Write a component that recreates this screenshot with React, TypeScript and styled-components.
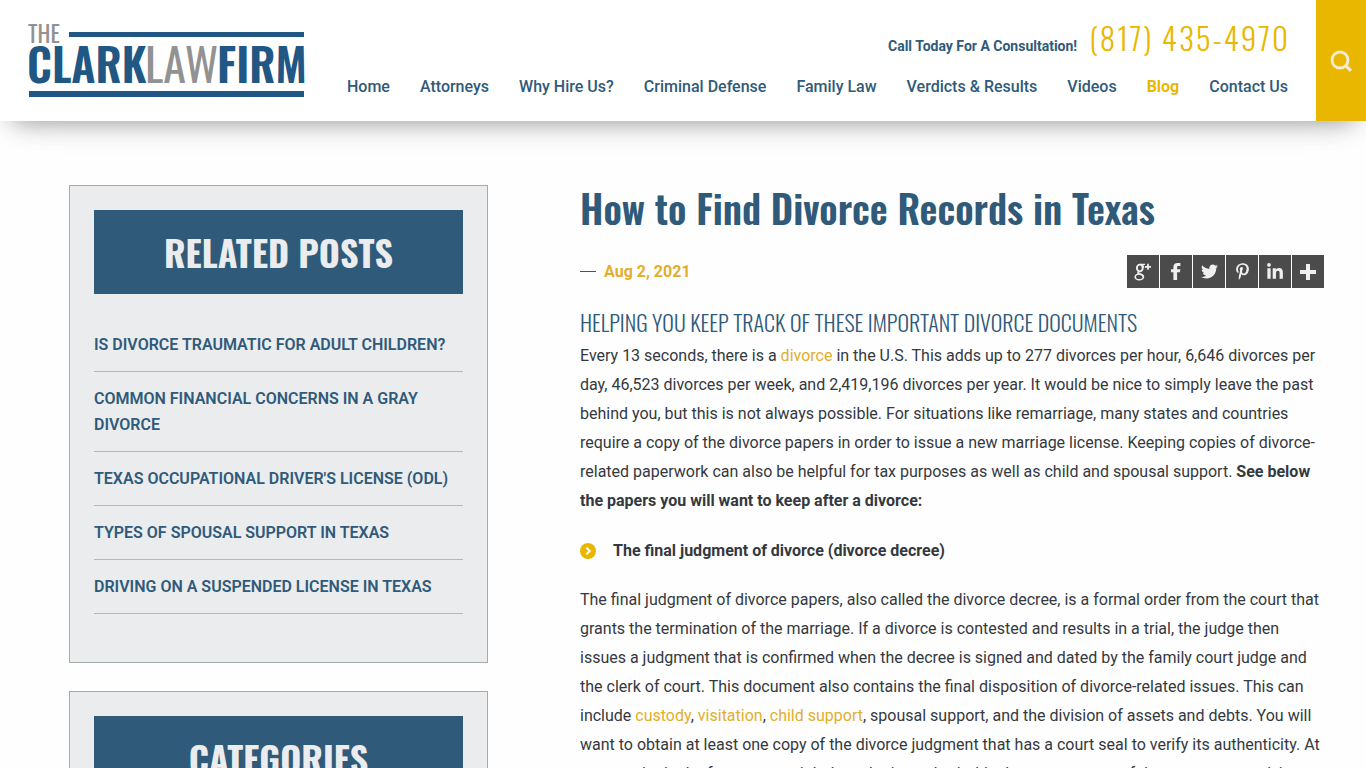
import React from 'react';
import styled, { createGlobalStyle } from 'styled-components';
import { FaFacebookF, FaLinkedinIn, FaPinterestP, FaTwitter } from 'react-icons/fa';

const color = {
  navy: '#305a7a',
  gold: '#eab700',
  link: '#e2ae2c',
  text: '#34393e',
  panel: '#eaecee',
  rule: '#a6acac',
};

const heading = "Oswald, 'Roboto Condensed', sans-serif";

const GlobalStyle = createGlobalStyle`
  *, *::before, *::after { box-sizing: border-box; }
  body {
    margin: 0;
    background: #fefefe;
    color: ${color.text};
    font: 400 16px/29px Roboto, sans-serif;
  }
  h1, h2, h3, p, ul { margin: 0; padding: 0; }
  ul { list-style: none; }
  a { text-decoration: none; }
`;

const Header = styled.header`
  position: relative;
  display: flex;
  min-height: 121px;
  background: #fff;
  box-shadow: 0 12px 24px -12px rgba(0, 0, 0, 0.4), 0 20px 40px -20px rgba(0, 0, 0, 0.08);
`;

const LogoLink = styled.a`
  flex: none;
  padding: 20px 0 0 24px;
`;

const LogoArt = styled.svg`
  display: block;
  overflow: visible;
  font-family: ${heading};
`;

const HeaderBody = styled.div`
  flex: 1;
  display: flex;
  flex-direction: column;
  align-items: flex-end;
  padding: 13px 26px 0 0;
`;

const CallLine = styled.p`
  display: flex;
  align-items: baseline;
  gap: 12px;
  color: ${color.navy};
  font-size: 14px;
  font-weight: 700;
  line-height: 48px;
`;

const Phone = styled.a`
  color: ${color.gold};
  font-family: ${heading};
  font-size: 31px;
  font-weight: 300;
  letter-spacing: 2px;
`;

const NavList = styled.ul`
  display: flex;
  gap: 30px;
  line-height: 24px;
  margin: 5px 2px 0 0;
`;

const NavLink = styled.a<{ $active?: boolean }>`
  color: ${(p) => (p.$active ? color.gold : color.navy)};
  font-weight: ${(p) => (p.$active ? 700 : 500)};
`;

const SearchButton = styled.button`
  width: 50px;
  border: 0;
  padding: 0;
  display: flex;
  align-items: center;
  justify-content: center;
  background: ${color.gold};
  color: #f6ecd0;
`;

const Page = styled.div`
  display: grid;
  grid-template-columns: 419fr 744fr;
  align-items: start;
  column-gap: 92px;
  padding: 64px 42px 0 69px;
`;

const Sidebar = styled.aside`
  display: grid;
  gap: 28px;
`;

const Panel = styled.section`
  padding: 24px;
  background: ${color.panel};
  border: 1px solid ${color.rule};
`;

const PanelTitle = styled.h2`
  padding: 12px;
  background: ${color.navy};
  color: ${color.panel};
  font: 700 36px/60px ${heading};
  text-align: center;
  text-transform: uppercase;
`;

const PostList = styled.ul`
  margin: 24px 0;
`;

const PostItem = styled.li`
  padding: 14px 0 13px;
  border-bottom: 1px solid #b4b9bb;
  line-height: 26px;
`;

const PostLink = styled.a`
  color: ${color.navy};
  font-weight: 600;
  text-transform: uppercase;
`;

const Title = styled.h1`
  color: ${color.navy};
  font: 600 39px/44px ${heading};
`;

const Meta = styled.div`
  display: flex;
  align-items: center;
  justify-content: space-between;
  margin: 26px 0 16px;
`;

const PostDate = styled.time`
  display: flex;
  align-items: center;
  gap: 8px;
  color: ${color.link};
  font-weight: 700;

  &::before {
    content: '';
    width: 16px;
    height: 1px;
    background: ${color.navy};
  }
`;

const ShareList = styled.ul`
  display: flex;
  gap: 1px;
`;

const ShareLink = styled.a`
  display: flex;
  align-items: center;
  justify-content: center;
  width: 32px;
  height: 33px;
  background: #4b4b4b;
  color: #efefef;
`;

const Subtitle = styled.h3`
  color: ${color.navy};
  font: 350 22px/36px ${heading};
  padding-bottom: 1px;
  text-transform: uppercase;
`;

const TextLink = styled.a`
  color: ${color.link};
`;

const PaperItem = styled.li`
  display: flex;
  align-items: center;
  gap: 17px;
  margin: 21px 0 20px;
  font-weight: 700;
`;

const nav = [
  'Home', 'Attorneys', 'Why Hire Us?', 'Criminal Defense', 'Family Law',
  'Verdicts & Results', 'Videos', 'Blog', 'Contact Us',
];

const relatedPosts = [
  'Is Divorce Traumatic for Adult Children?',
  'Common Financial Concerns in a Gray Divorce',
  "Texas Occupational Driver's License (ODL)",
  'Types of Spousal Support in Texas',
  'Driving on a Suspended License in Texas',
];

const categories = ['Criminal Defense', 'Divorce', 'Family Law'];

const PlusIcon = () => (
  <svg width="16" height="16" viewBox="0 0 16 16" aria-hidden="true">
    <path d="M6 0h4v6h6v4h-6v6H6v-6H0V6h6z" fill="currentColor" />
  </svg>
);

const GooglePlusIcon = () => (
  <svg width="18" height="18" viewBox="0 0 18 18" fill="none" stroke="currentColor" aria-hidden="true">
    <ellipse cx="5.8" cy="5" rx="2.9" ry="3.4" strokeWidth="1.9" />
    <path d="M6 1.4h5M8.2 1.8c1 .7 1.4 1.6 1.4 3" strokeWidth="1.4" />
    <path d="M5.2 8.2c-2.4 1.5-1 2.3.6 2.8 2.6.7 3.6 1.4 3.6 2.9" strokeWidth="1.6" />
    <ellipse cx="5.3" cy="13.9" rx="4.1" ry="2.9" strokeWidth="1.6" />
    <path d="M14 .8v6M11 3.8h6" strokeWidth="1.7" />
  </svg>
);

const FacebookIcon = () => (
  <svg width="10" height="17" viewBox="0 0 10 17" fill="currentColor" aria-hidden="true">
    <path d="M2.4 17V9.2H0V6.2h2.4V4.2C2.4 1.4 3.9 0 6.4 0H9.4v3H7.6c-1 0-1.5.4-1.5 1.4v1.8h3.2l-.4 3H6.1V17z" />
  </svg>
);

const shares = [
  { label: 'Google Plus', icon: <GooglePlusIcon /> },
  { label: 'Facebook', icon: <FacebookIcon /> },
  { label: 'Twitter', icon: <FaTwitter size={17} /> },
  { label: 'Pinterest', icon: <FaPinterestP size={17} /> },
  { label: 'LinkedIn', icon: <FaLinkedinIn size={18} /> },
  { label: 'More', icon: <PlusIcon /> },
];

const Logo = () => (
  <LogoArt width="284" height="80" viewBox="24 20 284 80" role="img" aria-label="The Clark Law Firm">
    <text x="28" y="43" fontSize="23" fontWeight="400" fill="#929292">THE</text>
    <text x="27" y="83" fontSize="45" fontWeight="600" fill="#205784">CLARK</text>
    <text x="145" y="83" fontSize="46" fontWeight="400" fill="#929292">LAW</text>
    <text x="217" y="83" fontSize="45" fontWeight="600" fill="#205784">FIRM</text>
    <rect x="69" y="32" width="235" height="5" fill="#205784" />
    <rect x="29" y="91" width="275" height="6" fill="#205784" />
  </LogoArt>
);

const SearchIcon = () => (
  <svg width="22" height="22" viewBox="0 0 22 22" fill="none" stroke="currentColor" aria-hidden="true">
    <circle cx="10" cy="10" r="8" strokeWidth="2.9" />
    <path d="M15.6 15.6 21 20.8" strokeWidth="3.2" />
  </svg>
);

const Bullet = () => (
  <svg width="16" height="16" viewBox="0 0 16 16" aria-hidden="true">
    <circle cx="8" cy="8" r="8" fill={color.gold} />
    <path d="M6.4 4.6 9.8 8l-3.4 3.4" fill="none" stroke="#fff" strokeWidth="2" />
  </svg>
);

export default function App() {
  return (
    <>
      <GlobalStyle />
      <Header>
        <LogoLink href="#"><Logo /></LogoLink>
        <HeaderBody>
          <CallLine>
            Call Today For A Consultation!
            <Phone href="tel:8174354970">(817) 435-4970</Phone>
          </CallLine>
          <nav>
            <NavList>
              {nav.map((item) => (
                <li key={item}>
                  <NavLink href="#" $active={item === 'Blog'}>{item}</NavLink>
                </li>
              ))}
            </NavList>
          </nav>
        </HeaderBody>
        <SearchButton aria-label="Search"><SearchIcon /></SearchButton>
      </Header>
      <Page>
        <Sidebar>
          <Panel>
            <PanelTitle>Related Posts</PanelTitle>
            <PostList>
              {relatedPosts.map((post) => (
                <PostItem key={post}><PostLink href="#">{post}</PostLink></PostItem>
              ))}
            </PostList>
          </Panel>
          <Panel>
            <PanelTitle>Categories</PanelTitle>
            <PostList>
              {categories.map((name) => (
                <PostItem key={name}><PostLink href="#">{name}</PostLink></PostItem>
              ))}
            </PostList>
          </Panel>
        </Sidebar>
        <main>
          <Title>How to Find Divorce Records in Texas</Title>
          <Meta>
            <PostDate dateTime="2021-08-02">Aug 2, 2021</PostDate>
            <ShareList>
              {shares.map(({ label, icon }) => (
                <li key={label}><ShareLink href="#" aria-label={label}>{icon}</ShareLink></li>
              ))}
            </ShareList>
          </Meta>
          <Subtitle>Helping You Keep Track of These Important Divorce Documents</Subtitle>
          <p>
            Every 13 seconds, there is a <TextLink href="#">divorce</TextLink> in the U.S. This adds up to 277
            divorces per hour, 6,646 divorces per day, 46,523 divorces per week, and 2,419,196 divorces per year. It
            would be nice to simply leave the past behind you, but this is not always possible. For situations like
            remarriage, many states and countries require a copy of the divorce papers in order to issue a new
            marriage license. Keeping copies of divorce-related paperwork can also be helpful for tax purposes as
            well as child and spousal support. <strong>See below the papers you will want to keep after a
            divorce:</strong>
          </p>
          <ul>
            <PaperItem><Bullet />The final judgment of divorce (divorce decree)</PaperItem>
          </ul>
          <p>
            The final judgment of divorce papers, also called the divorce decree, is a formal order from the court
            that grants the termination of the marriage. If a divorce is contested and results in a trial, the judge
            then issues a judgment that is confirmed when the decree is signed and dated by the family court judge
            and the clerk of court. This document also contains the final disposition of divorce-related issues.
            This can include <TextLink href="#">custody</TextLink>, <TextLink href="#">visitation</TextLink>,{' '}
            <TextLink href="#">child support</TextLink>, spousal support, and the division of assets and debts. You
            will want to obtain at least one copy of the divorce judgment that has a court seal to verify its
            authenticity. At some point in the future, you might be asked to submit this document as proof that you
            are complying with the order.
          </p>
        </main>
      </Page>
    </>
  );
}
